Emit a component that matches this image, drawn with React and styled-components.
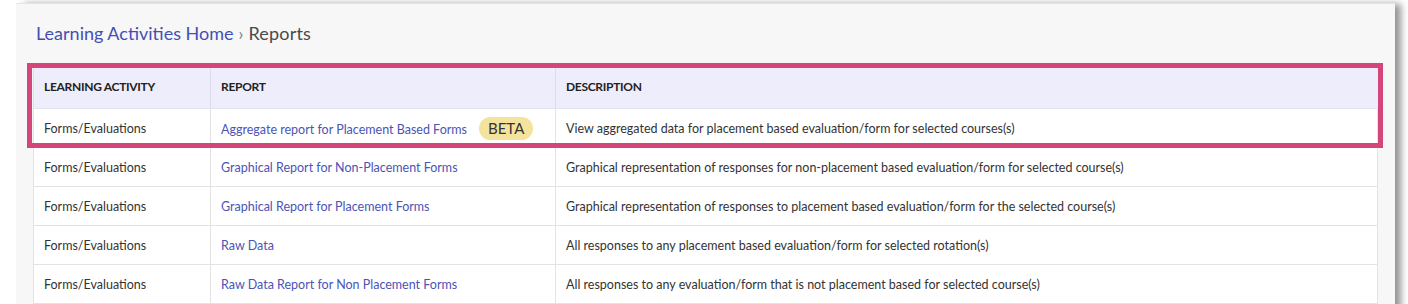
import React from 'react';
import styled, { createGlobalStyle } from 'styled-components';

const GlobalStyle = createGlobalStyle`
  html, body {
    margin: 0;
    padding: 0;
    background: #ffffff;
    font-family: 'Lato', 'Open Sans', sans-serif;
  }
`;

const reports = [
  {
    activity: 'Forms/Evaluations',
    name: 'Aggregate report for Placement Based Forms',
    beta: true,
    description: 'View aggregated data for placement based evaluation/form for selected courses(s)',
  },
  {
    activity: 'Forms/Evaluations',
    name: 'Graphical Report for Non-Placement Forms',
    description: 'Graphical representation of responses for non-placement based evaluation/form for selected course(s)',
  },
  {
    activity: 'Forms/Evaluations',
    name: 'Graphical Report for Placement Forms',
    description: 'Graphical representation of responses to placement based evaluation/form for the selected course(s)',
  },
  {
    activity: 'Forms/Evaluations',
    name: 'Raw Data',
    description: 'All responses to any placement based evaluation/form for selected rotation(s)',
  },
  {
    activity: 'Forms/Evaluations',
    name: 'Raw Data Report for Non Placement Forms',
    description: 'All responses to any evaluation/form that is not placement based for selected course(s)',
  },
];

const App = () => {
  return (
    <>
      <GlobalStyle />
      <Page>
        <Panel>
          <Breadcrumb>
            <CrumbLink href="#">Learning Activities Home</CrumbLink>
            <Separator>›</Separator>
            <CrumbCurrent>Reports</CrumbCurrent>
          </Breadcrumb>
          <TableWrap>
            <Table>
              <colgroup>
                <col style={{ width: 177 }} />
                <col style={{ width: 345 }} />
                <col />
              </colgroup>
              <thead>
                <tr>
                  <HeadCell>Learning Activity</HeadCell>
                  <HeadCell>Report</HeadCell>
                  <HeadCell>Description</HeadCell>
                </tr>
              </thead>
              <tbody>
                {reports.map((r) => (
                  <tr key={r.name}>
                    <Cell>{r.activity}</Cell>
                    <Cell>
                      <ReportLink href="#">{r.name}</ReportLink>
                      {r.beta && <Badge>BETA</Badge>}
                    </Cell>
                    <Cell>{r.description}</Cell>
                  </tr>
                ))}
              </tbody>
            </Table>
            <Highlight />
          </TableWrap>
        </Panel>
      </Page>
    </>
  );
};

const Page = styled.div`
  width: 1408px;
  height: 304px;
  overflow: hidden;
  padding-top: 3px;
  box-sizing: border-box;
`;

const Panel = styled.div`
  margin-left: 16px;
  width: 1379px;
  height: 320px;
  box-sizing: border-box;
  background: #f7f7f7;
  border-top: 1px solid #e4e4e4;
  padding: 0 17px;
  box-shadow: 7px 0 7px -1px rgba(0, 0, 0, 0.42);
`;

const Breadcrumb = styled.div`
  display: flex;
  align-items: baseline;
  gap: 5px;
  padding: 17px 0 0 3px;
  height: 42px;
  box-sizing: border-box;
  font-size: 18px;
  line-height: 24px;
`;

const CrumbLink = styled.a`
  color: #4350b3;
  text-decoration: none;
`;

const Separator = styled.span`
  color: #777;
  font-size: 17px;
`;

const CrumbCurrent = styled.span`
  color: #4a4a4a;
  letter-spacing: 0.2px;
`;

const TableWrap = styled.div`
  position: relative;
  margin-top: 17px;
`;

const Table = styled.table`
  width: 100%;
  border-collapse: collapse;
  table-layout: fixed;
  background: #fff;
  border-top: 1px solid #dcdcdc;
`;

const HeadCell = styled.th`
  height: 44px;
  padding: 0 10px;
  text-align: left;
  text-transform: uppercase;
  font-size: 12px;
  font-weight: 700;
  letter-spacing: -0.3px;
  color: #222;
  background: #eeedfc;
  border-left: 1px solid #dcdcee;
  border-bottom: 1px solid #e2e2f2;
  &:first-child {
    border-left: 1px solid #e0e0e0;
  }
`;

const Cell = styled.td`
  height: 38px;
  padding: 0 10px;
  font-size: 12.5px;
  color: #333;
  border-left: 1px solid #e3e3e3;
  border-right: 1px solid #e3e3e3;
  border-bottom: 1px solid #e3e3e3;
  white-space: nowrap;
`;

const ReportLink = styled.a`
  color: #4a54b6;
  text-decoration: none;
`;

const Badge = styled.span`
  display: inline-block;
  margin-left: 12px;
  padding: 2px 9px;
  border-radius: 12px;
  background: #f4e39d;
  color: #333;
  font-size: 15px;
  line-height: 19px;
`;

const Highlight = styled.div`
  position: absolute;
  left: -6px;
  top: 0;
  width: 1356px;
  height: 85px;
  box-sizing: border-box;
  border: 5px solid #d4467a;
  pointer-events: none;
`;

export default App;
